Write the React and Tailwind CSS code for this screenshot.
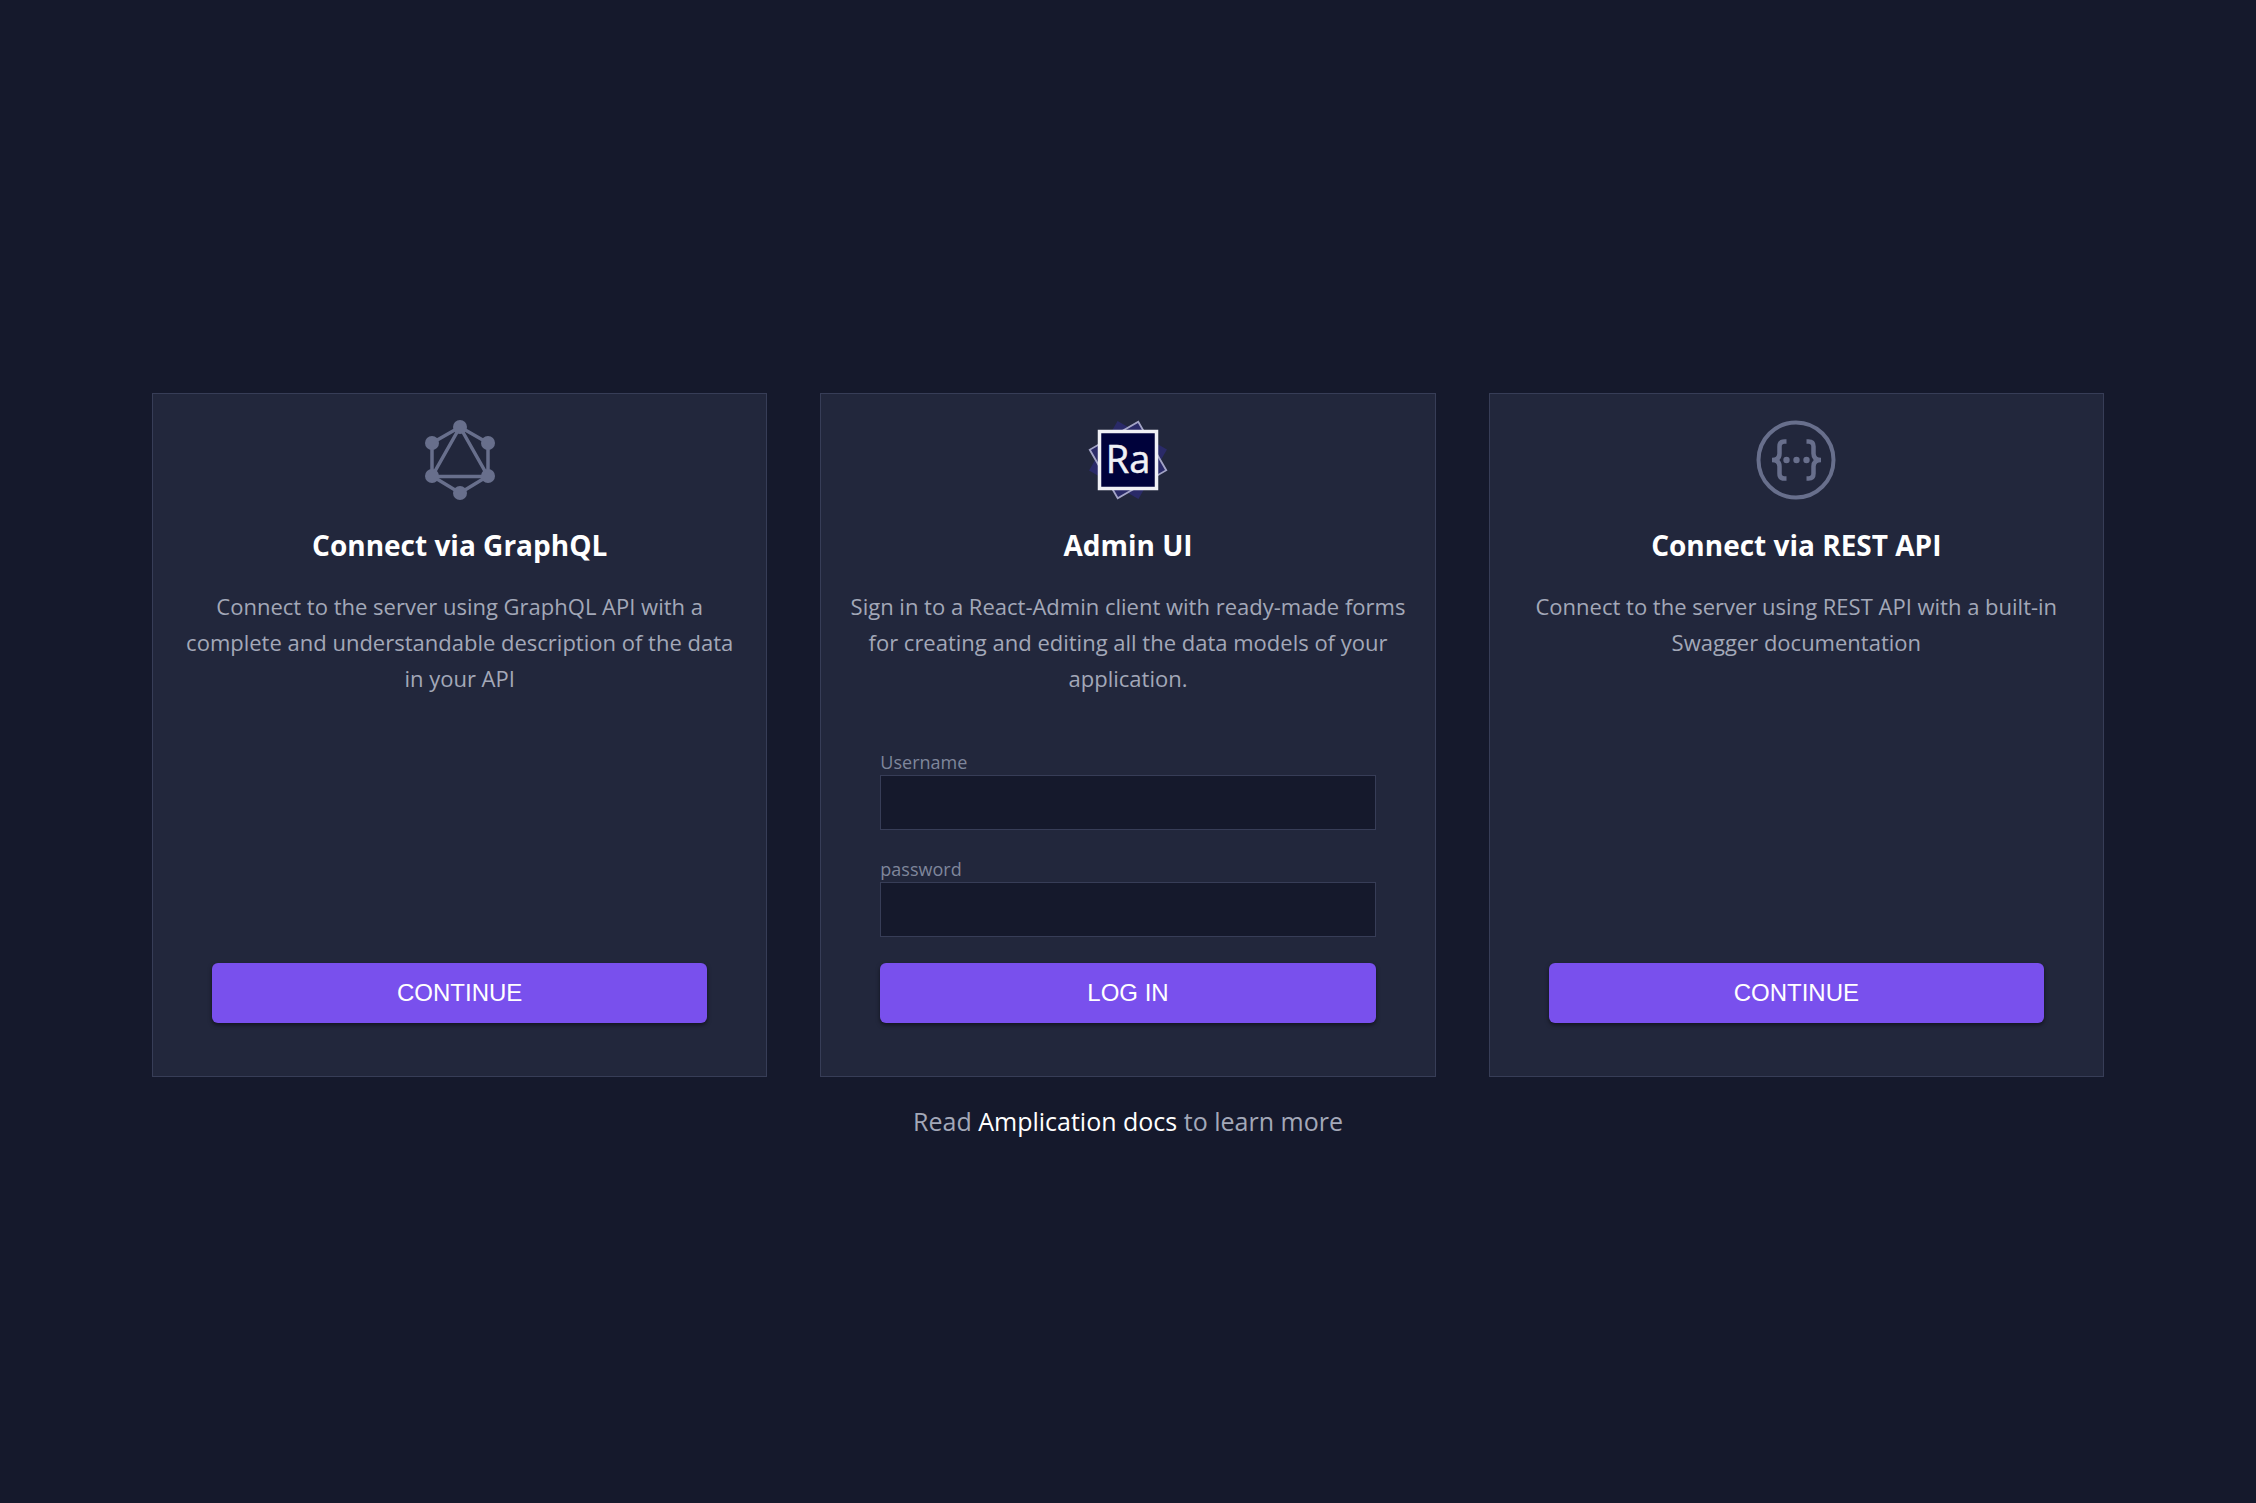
function GraphQLIcon() {
  const nodes = [
    [40, 7],
    [68, 23],
    [68, 56],
    [40, 73],
    [12, 56],
    [12, 23],
  ];
  return (
    <svg viewBox="0 0 80 80" className="size-20" aria-hidden="true">
      <g fill="none" stroke="#686f8c" strokeWidth="3.5">
        <path d="M40 7 68 23V56L40 73 12 56V23Z" />
        <path d="M40 7 68 56.5H12Z" />
      </g>
      {nodes.map(([x, y]) => (
        <circle key={`${x}-${y}`} cx={x} cy={y} r="7" fill="#686f8c" />
      ))}
    </svg>
  );
}

function ReactAdminIcon() {
  return (
    <svg viewBox="0 0 80 80" className="size-20" aria-hidden="true">
      <rect x="11.5" y="11.5" width="57" height="57" fill="#2a2a68" transform="rotate(30 40 40)" />
      <rect x="12" y="12" width="56" height="56" fill="#2a2a68" stroke="#a3a4c6" strokeWidth="1.8" transform="rotate(-30 40 40)" />
      <rect x="11.5" y="11.5" width="57" height="57" fill="#00023b" stroke="#f0f0f5" strokeWidth="3.5" />
      <text x="40" y="52.5" textAnchor="middle" fontSize="38" fill="#f0f0f5" stroke="#f0f0f5" strokeWidth="0.5" className="font-['Open_Sans',sans-serif]">
        Ra
      </text>
    </svg>
  );
}

function SwaggerIcon() {
  return (
    <svg viewBox="0 0 80 80" className="size-20" aria-hidden="true">
      <g fill="none" stroke="#686f8c" strokeWidth="4.5">
        <circle cx="40" cy="40" r="37.5" strokeWidth="4" />
        <path d="M30.500 21.500h-2q-5 0-5 5v7q0 6.500-7.500 6.500q7.500 0 7.500 6.500v7q0 5 5 5h2" />
        <path d="M50.500 21.500h2q5 0 5 5v7q0 6.500 7.500 6.500q-7.500 0-7.500 6.500v7q0 5-5 5h-2" />
      </g>
      <g fill="#686f8c">
        <circle cx="30.500" cy="40" r="3.200" />
        <circle cx="40.500" cy="40" r="3.200" />
        <circle cx="50.500" cy="40" r="3.200" />
      </g>
    </svg>
  );
}

function Card({ icon, title, description, action, children }) {
  return (
    <section className="flex min-h-[684px] flex-col items-center border border-[#373d57] bg-[#22273c] px-6 pt-[26px] pb-[53px]">
      {icon}
      <h2 className="mt-[25px] text-[28px] leading-10 font-bold text-white">{title}</h2>
      <p className="mt-[23px] text-center text-[22px] leading-9">{description}</p>
      <form className="mt-auto flex w-full flex-col px-[35px]" onSubmit={(e) => e.preventDefault()}>
        {children}
        <button
          type="submit"
          className="h-[60px] rounded-md bg-[#7950ed] font-['Liberation_Sans',Arial,sans-serif] text-2xl text-white shadow-[0_2px_4px_rgba(0,0,0,0.5)]"
        >
          {action}
        </button>
      </form>
    </section>
  );
}

function Field({ id, label, type }) {
  return (
    <div className="mb-[26px] flex flex-col">
      <label htmlFor={id} className="text-lg leading-[26px] text-[#7f869b]">
        {label}
      </label>
      <input id={id} type={type} className="h-[55px] border border-[#373d57] bg-[#15192c] px-3 text-white outline-none" />
    </div>
  );
}

export default function App() {
  return (
    <main className="min-h-screen bg-[#15192c] px-[152px] pt-[393px] pb-10 font-['Open_Sans','Noto_Sans',sans-serif] text-[#a3a8b8]">
      <div className="grid grid-cols-3 gap-[53px]">
        <Card
          icon={<GraphQLIcon />}
          title="Connect via GraphQL"
          description="Connect to the server using GraphQL API with a complete and understandable description of the data in your API"
          action="CONTINUE"
        />
        <Card
          icon={<ReactAdminIcon />}
          title="Admin UI"
          description="Sign in to a React-Admin client with ready-made forms for creating and editing all the data models of your application."
          action="LOG IN"
        >
          <Field id="username" label="Username" type="text" />
          <Field id="password" label="password" type="password" />
        </Card>
        <Card
          icon={<SwaggerIcon />}
          title="Connect via REST API"
          description="Connect to the server using REST API with a built-in Swagger documentation"
          action="CONTINUE"
        />
      </div>
      <p className="mt-6 text-center text-[25px] leading-10">
        Read{" "}
        <a href="#docs" className="text-white">
          Amplication docs
        </a>{" "}
        to learn more
      </p>
    </main>
  );
}
